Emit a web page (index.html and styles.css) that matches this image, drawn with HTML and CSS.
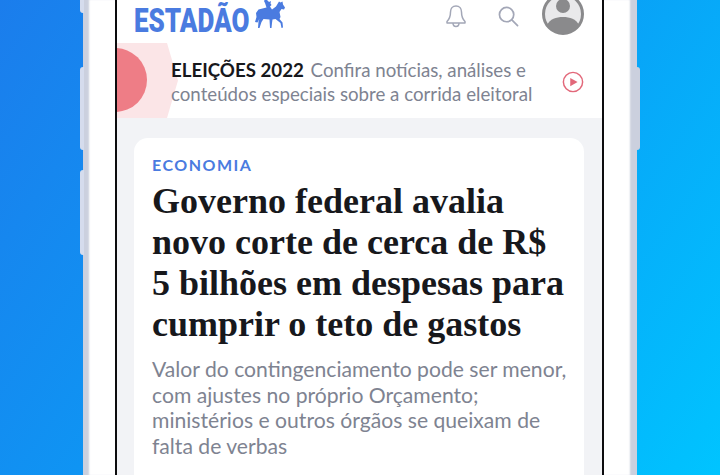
FILE: index.html
```html
<!DOCTYPE html>
<html lang="pt-BR">
<head>
    <meta charset="UTF-8">
    <title>Estadão</title>
    <link rel="stylesheet" href="styles.css">
</head>
<body>

<div class="phone">
    <div class="side-button side-button-top"></div>
    <div class="side-button side-button-mid"></div>
    <div class="side-button side-button-low"></div>
    <div class="side-button side-button-right"></div>
    <div class="screen">
        <header class="topbar">
            <div class="logo">
                <span class="logo-text">ESTADÃO</span>
                <svg class="logo-horse" viewBox="0 0 32 32" width="32" height="32">
                    <g fill="#4a7be0">
                        <path d="M12 0l2 2 2-1-.5 2.500 1 1.500-1.500 1.500 2 3 4-3 3-5 1.500 1 2-1 .5 3 2 3-1 2-2.500-.5-2 3 1 5-1 2 3 3.500 .5 5-1.500.5-1-5-5-4-3 .5-.5 3.500-.5 5h-1.500l-.5-8.500-6-.5-2 3-2 6h-1.500l.5-6.500 1-3-2 4-2.500-.5 1.500-5-.5-4 2.500-3.500 6-1.500 2-.5-1.500-4.500-1-2 1-1.500z"/>
                    </g>
                </svg>
            </div>
            <div class="topbar-icons">
                <svg class="icon-bell" viewBox="0 0 22 24" width="22" height="24" fill="none" stroke="#a3a7b7" stroke-width="1.500" stroke-linejoin="round">
                    <path d="M11 2c-3.500 0-5.500 2.800-5.500 6 0 5-1.500 7.500-3.500 9.500v1.500h18v-1.500c-2-2-3.500-4.500-3.500-9.500 0-3.200-2-6-5.500-6z"/>
                    <path d="M8 19c0 2 1.300 3.500 3 3.500s3-1.500 3-3.500"/>
                </svg>
                <svg class="icon-search" viewBox="0 0 22 22" width="21" height="21" fill="none" stroke="#a3a7b7" stroke-width="1.800" stroke-linecap="round">
                    <circle cx="9" cy="9" r="7.500"/>
                    <path d="M14.500 14.500l6 6"/>
                </svg>
                <svg class="icon-avatar" viewBox="0 0 42 42" width="42" height="42">
                    <circle cx="21" cy="21" r="19.500" fill="#e9e9eb" stroke="#8a8a8c" stroke-width="3"/>
                    <circle cx="21" cy="13" r="7" fill="#8a8a8c"/>
                    <path d="M5 32c3-6 9-8 16-8s13 2 16 8c-4 6-10 9-16 9s-12-3-16-9z" fill="#8a8a8c"/>
                </svg>
            </div>
        </header>

        <section class="promo">
            <div class="promo-hex"></div>
            <div class="promo-dot"></div>
            <div class="promo-text">
                <div><strong>ELEIÇÕES 2022</strong> <span>Confira notícias, análises e</span></div>
                <div>conteúdos especiais sobre a corrida eleitoral</div>
            </div>
            <svg class="promo-play" viewBox="0 0 24 24" width="22" height="22">
                <circle cx="12" cy="12" r="10.500" fill="none" stroke="#e2687a" stroke-width="1.600"/>
                <path d="M9 7.500l8 4.500-8 4.500z" fill="#e2687a"/>
            </svg>
        </section>

        <main class="feed">
            <article class="card">
                <div class="card-tag">ECONOMIA</div>
                <h1 class="card-title">Governo federal avalia novo corte de cerca de R$ 5 bilhões em despesas para cumprir o teto de gastos</h1>
                <p class="card-lead">Valor do contingenciamento pode ser menor, com ajustes no próprio Orçamento; ministérios e outros órgãos se queixam de falta de verbas</p>
            </article>
        </main>
    </div>
</div>

</body>
</html>
```

FILE: styles.css
```css
* {
    box-sizing: border-box;
}
html, body {
    height: 100%;
}
body {
    margin: 0;
    overflow: hidden;
    background: linear-gradient(125deg, #1b7dec 0%, #0a9ef6 55%, #00c4ff 100%);
    font-family: "Lato", sans-serif;
}
.phone {
    position: relative;
    width: 554px;
    height: 475px;
    margin-left: 83px;
    padding: 0 33px 0 32px;
    background: #fff;
    box-shadow: inset 7px 0 2px -1px #cbd0de, inset -8px 0 2px -1px #cbd0de;
}
.side-button {
    position: absolute;
    width: 4px;
    background: #d5dced;
}
.side-button-top {
    left: -3px;
    top: -1px;
    height: 14px;
    border-radius: 0 0 0 3px;
}
.side-button-mid {
    left: -3px;
    top: 67px;
    height: 83px;
    border-radius: 3px 0 0 3px;
}
.side-button-low {
    left: -3px;
    top: 170px;
    height: 85px;
    border-radius: 3px 0 0 3px;
}
.side-button-right {
    right: -3px;
    top: 67px;
    height: 83px;
    background: #cbd0de;
    border-radius: 0 3px 3px 0;
}
.screen {
    height: 100%;
    display: flex;
    flex-direction: column;
    border-left: 2px solid #0c0c0e;
    border-right: 2px solid #0c0c0e;
    background: #fff;
    overflow: hidden;
}
.topbar {
    flex: none;
    height: 43px;
    display: flex;
    justify-content: space-between;
    align-items: flex-start;
    padding: 0 18px 0 17px;
}
.logo {
    display: flex;
    align-items: flex-start;
}
.logo-text {
    display: block;
    width: 121px;
    margin-top: 1px;
    font-family: "Roboto", sans-serif;
    font-size: 34px;
    line-height: 38px;
    font-weight: 900;
    color: #4a7be0;
    transform: scaleX(0.765);
    transform-origin: left center;
}
.topbar-icons {
    display: flex;
    align-items: flex-start;
    margin-top: -7px;
}
.icon-bell {
    margin-top: 11px;
    margin-right: 31px;
}
.icon-search {
    margin-top: 13px;
    margin-right: 23px;
}
.promo {
    position: relative;
    flex: none;
    height: 75px;
    display: flex;
    align-items: center;
    padding: 2px 0 0 54px;
}
.promo-hex {
    position: absolute;
    left: 0;
    top: 0;
    width: 61px;
    height: 75px;
    background: #fbe5e7;
    clip-path: polygon(0 0, 82% 0, 100% 50%, 82% 100%, 0 100%);
}
.promo-dot {
    position: absolute;
    left: -34px;
    top: 5px;
    width: 64px;
    height: 64px;
    border-radius: 50%;
    background: #ee7d86;
}
.promo-text {
    position: relative;
    flex: none;
    width: 376px;
    font-size: 18.700px;
    line-height: 24px;
    color: #7e8391;
}
.promo-text strong {
    color: #17181c;
    font-weight: 700;
    margin-right: 2px;
}
.promo-play {
    flex: none;
    margin-left: 15px;
}
.feed {
    flex: 1;
    padding: 20px 18px 0 17px;
    background: #f2f3f6;
}
.card {
    height: 100%;
    padding: 17px 18px 0;
    background: #fff;
    border-radius: 14px 14px 0 0;
}
.card-tag {
    font-size: 16px;
    line-height: 20px;
    font-weight: 700;
    letter-spacing: 1.500px;
    color: #4a7be0;
}
.card-title {
    margin: 6px 0 0;
    font-family: "Liberation Serif", serif;
    font-size: 36px;
    line-height: 41px;
    font-weight: 700;
    color: #17181c;
}
.card-lead {
    margin: 12px -6px 0 0;
    font-size: 21.150px;
    line-height: 25.500px;
    color: #7e8391;
}
```
